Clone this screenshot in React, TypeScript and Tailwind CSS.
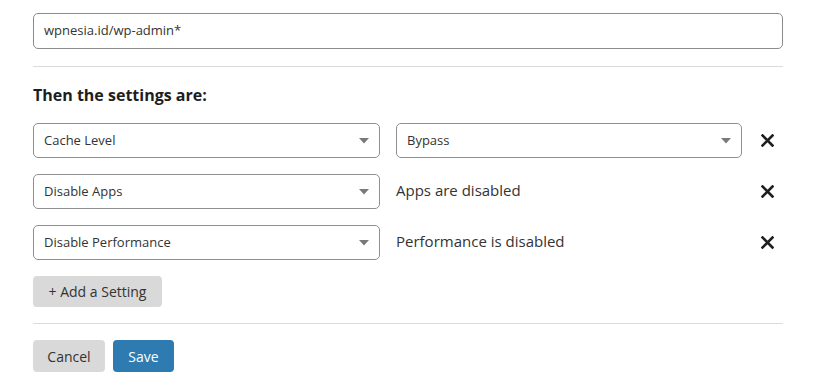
import React from "react";

function Caret() {
  return (
    <svg width="10" height="6" viewBox="0 0 10 6" className="shrink-0">
      <path d="M0 0 L10 0 L5 5.5 Z" fill="#7a7a7a" />
    </svg>
  );
}

function Select({ label }: { label: string }) {
  return (
    <div className="h-[35px] border border-[#8f8f8f] rounded-[5px] bg-white flex items-center justify-between pl-[10px] pr-[10px] text-[13px] text-[#333]">
      <span>{label}</span>
      <Caret />
    </div>
  );
}

function Close() {
  return (
    <div className="flex items-center h-[34px] pl-[19px]">
      <svg width="13" height="13" viewBox="0 0 13 13">
        <path d="M1.5 1.5 L11.5 11.5 M11.5 1.5 L1.5 11.5" stroke="#1f1f1f" strokeWidth="2.6" strokeLinecap="square" />
      </svg>
    </div>
  );
}

export default function App() {
  return (
    <div
      className="w-[832px] h-[386px] bg-white pl-[33px] pr-[49px] pt-[13px]"
      style={{ fontFamily: '"Open Sans", "Noto Sans", sans-serif' }}
    >
      <div className="h-[36px] border border-[#8c8c8c] rounded-[5px] flex items-center px-[10px] text-[13px] text-[#333]">
        wpnesia.id/wp-admin*
      </div>
      <div className="mt-[17px] border-t border-[#dcdcdc]" />
      <div className="mt-[18px] text-[16px] font-bold text-[#1e1e1e] leading-[20px]">
        Then the settings are:
      </div>
      <div className="mt-[18px] flex flex-col gap-[16px]">
        <div className="grid grid-cols-[347px_346px_1fr] gap-x-[16px]">
          <Select label="Cache Level" />
          <Select label="Bypass" />
          <div className="-ml-[16px]"><Close /></div>
        </div>
        <div className="grid grid-cols-[347px_346px_1fr] gap-x-[16px]">
          <Select label="Disable Apps" />
          <div className="h-[33px] flex items-center text-[15px] text-[#333]">Apps are disabled</div>
          <div className="-ml-[16px]"><Close /></div>
        </div>
        <div className="grid grid-cols-[347px_346px_1fr] gap-x-[16px]">
          <Select label="Disable Performance" />
          <div className="h-[33px] flex items-center text-[15px] text-[#333]">Performance is disabled</div>
          <div className="-ml-[16px]"><Close /></div>
        </div>
      </div>
      <div className="mt-[16px]">
        <button className="h-[31px] w-[129px] rounded-[4px] bg-[#d9d9d9] text-[14px] text-[#333]">
          + Add a Setting
        </button>
      </div>
      <div className="mt-[16px] border-t border-[#dcdcdc]" />
      <div className="mt-[16px] flex gap-[8px]">
        <button className="h-[32px] w-[72px] rounded-[4px] bg-[#d9d9d9] text-[14px] text-[#333]">Cancel</button>
        <button className="h-[32px] w-[61px] rounded-[4px] bg-[#2d7bb1] text-[14px] text-white">Save</button>
      </div>
    </div>
  );
}
